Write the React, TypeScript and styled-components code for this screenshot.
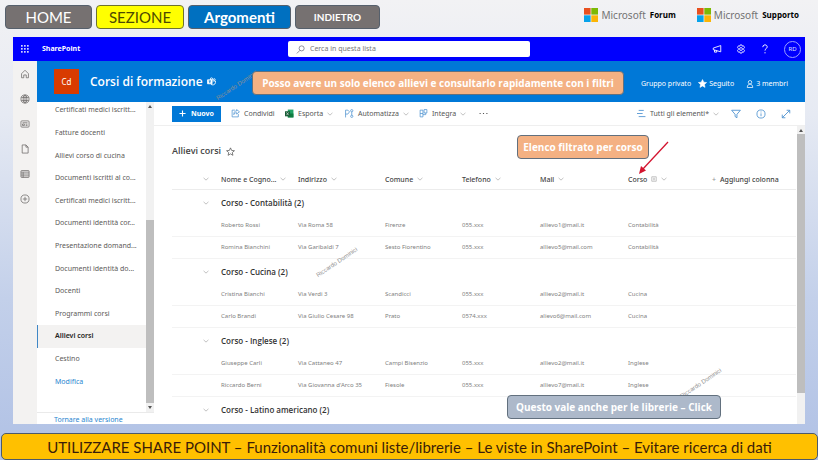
import React from 'react';
import styled, { createGlobalStyle } from 'styled-components';

const GlobalStyle = createGlobalStyle`
  *, *::before, *::after { box-sizing: border-box; }
  body { margin: 0; }
  button, input { font: inherit; color: inherit; }
  a { color: inherit; text-decoration: none; }
`;

const ui = '"Noto Sans", "Open Sans", sans-serif';
const geometric = 'Lato, "Open Sans", sans-serif';

const Page = styled.div`
  min-height: 100vh;
  display: flex;
  flex-direction: column;
  overflow: hidden;
  font: 7px/10px ${ui};
  color: #555;
  background: linear-gradient(180deg, #f2f2f4 0%, #e6eaf3 25%, #c3d0ea 65%, #b0c1e5 100%);
`;

const SlideHeader = styled.header`
  height: 37px;
  padding: 4px 19px 8px 5px;
  display: flex;
  align-items: center;
  justify-content: space-between;
`;

const SlideNav = styled.nav`
  display: flex;
  gap: 4px;
`;

const SlideLink = styled.a<{ $width: number; $bg: string; $fg: string; $size: number; $bold?: boolean }>`
  width: ${(p) => p.$width}px;
  height: 24px;
  display: flex;
  align-items: center;
  justify-content: center;
  border: 1px solid ${(p) => (p.$fg === '#fff' ? '#56606c' : '#6d7230')};
  border-radius: 4px;
  background: ${(p) => p.$bg};
  color: ${(p) => p.$fg};
  font: ${(p) => (p.$bold ? 700 : 400)} ${(p) => p.$size}px/20px ${geometric};
`;

const Brands = styled.div`
  align-self: flex-start;
  margin-top: 4px;
  display: flex;
  gap: 21px;
`;

const Brand = styled.a`
  display: flex;
  align-items: center;
  color: #737373;
  font: 10px/14px "Noto Sans", sans-serif;
  svg { margin-right: 3px; }
  strong { margin-left: 4px; color: #000; font: 700 8px/14px "Open Sans", sans-serif; }
`;

const AppWindow = styled.main`
  position: relative;
  flex: 1;
  margin: 0 13px;
  display: flex;
  flex-direction: column;
  background: #fff;
`;

const SuiteBar = styled.div`
  height: 24px;
  display: grid;
  grid-template-columns: 1fr 242px 1fr;
  align-items: center;
  background: #0000fe;
  color: #fff;
`;

const SuiteBrand = styled.div`
  display: flex;
  align-items: center;
  gap: 12px;
  padding-left: 7px;
  font: 700 7px/10px ${ui};
`;

const SearchBox = styled.label`
  height: 16px;
  display: flex;
  align-items: center;
  gap: 5px;
  padding: 0 8px;
  border-radius: 2px;
  background: #fff;
  color: #6a6a7a;
  input {
    flex: 1;
    min-width: 0;
    padding: 0;
    border: 0;
    outline: 0;
    background: none;
    font: 7px/10px ${ui};
  }
  input::placeholder { color: #777; opacity: 1; }
`;

const SuiteActions = styled.div`
  display: flex;
  justify-content: flex-end;
  align-items: center;
  gap: 14px;
  padding-right: 4px;
`;

const IconButton = styled.button<{ $color?: string }>`
  padding: 0;
  border: 0;
  background: none;
  display: flex;
  align-items: center;
  justify-content: center;
  color: ${(p) => p.$color || 'inherit'};
`;

const Avatar = styled.button`
  width: 17px;
  height: 17px;
  padding: 0;
  border: 1px solid #9aa0ff;
  border-radius: 50%;
  background: none;
  color: #dfe2ff;
  font: 6px/10px ${ui};
`;

const Body = styled.div`
  flex: 1;
  display: flex;
`;

const Rail = styled.nav`
  width: 24px;
  padding-top: 8px;
  display: flex;
  flex-direction: column;
  align-items: center;
  gap: 15px;
  background: #f3f2f1;
  color: #6c6a68;
`;

const Site = styled.div`
  flex: 1;
  min-width: 0;
  display: flex;
  flex-direction: column;
`;

const SiteHeader = styled.div`
  height: 41px;
  padding: 0 17px;
  display: flex;
  align-items: center;
  background: #0078d7;
  color: #fff;
`;

const SiteLogo = styled.div`
  width: 25px;
  height: 25px;
  margin-right: 11px;
  display: flex;
  align-items: center;
  justify-content: center;
  background: #d83b01;
  font: 8px/10px ${ui};
`;

const SiteTitle = styled.h1`
  margin: 0 4px 0 0;
  font: 600 12px/16px "Open Sans", sans-serif;
`;

const SiteMeta = styled.div`
  margin-left: auto;
  padding-top: 4px;
  display: flex;
  align-items: center;
  font: 7px/10px ${ui};
`;

const MetaButton = styled.button<{ $space: number }>`
  margin-left: ${(p) => p.$space}px;
  padding: 0;
  border: 0;
  background: none;
  display: flex;
  align-items: center;
  gap: 2px;
`;

const Columns = styled.div`
  flex: 1;
  display: flex;
`;

const SideNav = styled.nav`
  width: 117px;
  display: flex;
  flex-direction: column;
`;

const SideScroll = styled.div`
  flex: 1;
  display: flex;
  overflow: hidden;
`;

const SideList = styled.ul`
  flex: 1;
  min-width: 0;
  margin: -3px 0 0;
  padding: 0 0 19px;
  list-style: none;
  display: grid;
  grid-auto-rows: 1fr;
`;

const SideItem = styled.li<{ $active?: boolean; $link?: boolean }>`
  display: flex;
  align-items: center;
  padding-left: 17px;
  border-left: 1px solid ${(p) => (p.$active ? '#3f87c6' : 'transparent')};
  background: ${(p) => (p.$active ? '#f3f2f1' : 'none')};
  color: ${(p) => (p.$link ? '#2a86d0' : p.$active ? '#252423' : '#5c5a58')};
  font-weight: ${(p) => (p.$active ? 600 : 400)};
  white-space: nowrap;
`;

const SideFooter = styled.a`
  padding: 3px 0 0 17px;
  border-top: 1px solid #eaeaea;
  color: #2a86d0;
  line-height: 8px;
`;

const Scrollbar = styled.div<{ $before: number; $after: number }>`
  width: 8px;
  flex: none;
  display: flex;
  flex-direction: column;
  align-items: center;
  padding-top: 3px;
  background: #f1f1f1;
  color: #555;
  svg { flex: none; }
  span {
    width: 100%;
    flex: 1;
    margin: ${(p) => p.$before}px 0 ${(p) => p.$after}px;
    background: #bebebe;
  }
`;

const Content = styled.section`
  flex: 1;
  min-width: 0;
  display: flex;
  flex-direction: column;
`;

const CommandBar = styled.div`
  height: 24px;
  padding: 0 14px 0 18px;
  display: flex;
  align-items: center;
  border-bottom: 1px solid #efefef;
`;

const NewButton = styled.button`
  width: 49px;
  height: 16px;
  margin-right: 10px;
  padding: 0;
  border: 0;
  display: flex;
  align-items: center;
  justify-content: center;
  gap: 5px;
  background: #0078d7;
  color: #fff;
  font: 700 7px/10px ${ui};
`;

const Command = styled.button<{ $width: number }>`
  width: ${(p) => p.$width}px;
  flex: none;
  padding: 0;
  border: 0;
  background: none;
  display: flex;
  align-items: center;
  gap: 4px;
  color: #555;
  white-space: nowrap;
  font: 7px/10px ${ui};
  svg { flex: none; }
  > svg:last-child { color: #999; }
`;

const ViewActions = styled.div`
  margin-left: auto;
  display: flex;
  align-items: center;
  gap: 15px;
  color: #4a90cf;
`;

const ListArea = styled.div`
  flex: 1;
  display: flex;
`;

const ListView = styled.div`
  flex: 1;
  min-width: 0;
  padding: 17px 9px 0 18px;
`;

const ListTitle = styled.h2`
  height: 16px;
  margin: 0 0 9px;
  display: flex;
  align-items: center;
  gap: 5px;
  color: #444;
  font: 600 9px/12px "Open Sans", sans-serif;
`;

const Table = styled.table`
  width: 100%;
  table-layout: fixed;
  border-collapse: separate;
  border-spacing: 0;
  text-align: left;
  th, td { padding: 0; white-space: nowrap; }
`;

const HeadCell = styled.th<{ $toggle?: boolean }>`
  height: 22px;
  && { padding-top: 2px; }
  border-bottom: 1px solid #ececec;
  color: #444;
  font: 500 7px/10px ${ui};
  svg { margin-left: ${(p) => (p.$toggle ? 31 : 4)}px; color: #999; }
`;

const AddMark = styled.span`
  margin-right: 4px;
  color: #999;
`;

const GroupCell = styled.th`
  height: 25px;
  color: #333;
  font: 600 8px/12px "Open Sans", sans-serif;
  svg { margin-left: 31px; color: #999; }
`;

const Cell = styled.td`
  height: 22px;
  && { padding-bottom: 1px; }
  border-bottom: 1px solid #f3f3f3;
  color: #808080;
  font: 6px/10px ${ui};
`;

const Callout = styled.div<{ $left: number; $top: number; $width: number; $bg: string }>`
  position: absolute;
  left: ${(p) => p.$left}px;
  top: ${(p) => p.$top}px;
  width: ${(p) => p.$width}px;
  height: 24px;
  display: flex;
  align-items: center;
  justify-content: center;
  border: 1px solid #62707e;
  border-radius: 4px;
  background: ${(p) => p.$bg};
  color: #fff;
  font: 700 10px/14px "Open Sans", sans-serif;
  white-space: nowrap;
`;

const Watermark = styled.span<{ $left: number; $top: number }>`
  position: absolute;
  left: ${(p) => p.$left}px;
  top: ${(p) => p.$top}px;
  transform: rotate(-34deg);
  transform-origin: left bottom;
  color: #909090;
  font: 6px/8px "Liberation Sans", sans-serif;
  white-space: nowrap;
`;

const Arrow = styled.svg`
  position: absolute;
  left: 624px;
  top: 104px;
`;

const Banner = styled.footer`
  height: 27px;
  margin: 9px 0 0 1px;
  display: flex;
  align-items: center;
  justify-content: center;
  border: 1px solid #4c5a6c;
  border-radius: 5px;
  background: #ffc000;
  color: #3b1d08;
  font: 15px/20px ${geometric};
  white-space: nowrap;
`;

const Icon = ({ size = 10, stroke = 1, children }: { size?: number; stroke?: number; children: React.ReactNode }) => (
  <svg width={size} height={size} viewBox="0 0 16 16" fill="none" stroke="currentColor" strokeWidth={stroke} aria-hidden="true">
    {children}
  </svg>
);

const Chevron = () => (
  <Icon size={6} stroke={1.6}><path d="M1.500 5L8 11l6.500-6" /></Icon>
);

const MicrosoftMark = () => (
  <svg width="14" height="14" viewBox="0 0 14 14" aria-hidden="true">
    <path fill="#e8501f" d="M0 0h6.6v6.6H0z" />
    <path fill="#7cb904" d="M7.3 0H14v6.6H7.3z" />
    <path fill="#06a2ea" d="M0 7.3h6.6V14H0z" />
    <path fill="#fbb506" d="M7.3 7.3H14V14H7.3z" />
  </svg>
);

const Waffle = () => (
  <svg width="10" height="10" viewBox="0 0 10 10" fill="#cfd2ff" aria-hidden="true">
    {[1, 4, 7].map((y) => [1, 4, 7].map((x) => <rect key={`${x}${y}`} x={x} y={y} width="1.7" height="1.7" />))}
  </svg>
);

const railIcons = [
  { name: 'Home', art: <path d="M2.500 7.500L8 2l5.500 5.500V14H10v-4.500H6V14H2.500z" /> },
  { name: 'Siti', art: <><circle cx="8" cy="8" r="6.500" /><ellipse cx="8" cy="8" rx="3" ry="6.500" /><path d="M2 5.700h12M2 10.300h12M8 1.500v13" /></> },
  { name: 'Notizie', art: <><rect x="1.500" y="3" width="13" height="10" rx="1.500" /><path d="M4 6h8M4 8h3v2.500H4zM9 8.300h3M9 10.500h3" /></> },
  { name: 'File', art: <path d="M3.500 1.500h6l3.500 3.500v9.500H3.500zM9.500 1.500V5H13" /> },
  { name: 'Elenchi', art: <><rect x="1.500" y="2.500" width="13" height="11" rx="1" /><path d="M1.500 5h13M1.500 8h13M1.500 11h13M5 5v8.500" /></> },
  { name: 'Crea', art: <><circle cx="8" cy="8" r="6.500" /><path d="M8 4.500v7M4.500 8h7" /></> },
];

const sideItems = [
  'Certificati medici iscritt...', 'Fatture docenti', 'Allievi corso di cucina', 'Documenti iscritti al co...',
  'Certificati medici iscritt...', 'Documenti identità cor...', 'Presentazione domand...', 'Documenti identità do...',
  'Docenti', 'Programmi corsi', 'Allievi corsi', 'Cestino', 'Modifica',
];

const groups = [
  { name: 'Contabilità', rows: [
    ['Roberto Rossi', 'Via Roma 58', 'Firenze', '055.xxx', 'allievo1@mail.it'],
    ['Romina Bianchini', 'Via Garibaldi 7', 'Sesto Fiorentino', '055.xxx', 'allievo5@mail.com'],
  ] },
  { name: 'Cucina', rows: [
    ['Cristina Bianchi', 'Via Verdi 3', 'Scandicci', '055.xxx', 'allievo2@mail.it'],
    ['Carlo Brandi', 'Via Giulio Cesare 98', 'Prato', '0574.xxx', 'alievo6@mail.com'],
  ] },
  { name: 'Inglese', rows: [
    ['Giuseppe Carli', 'Via Cattaneo 47', 'Campi Bisenzio', '055.xxx', 'allievo2@mail.it'],
    ['Riccardo Berni', "Via Giovanna d'Arco 35", 'Fiesole', '055.xxx', 'allievo7@mail.it'],
  ] },
  { name: 'Latino americano', rows: [] },
];

const columns = ['Nome e Cogno...', 'Indirizzo', 'Comune', 'Telefono', 'Mail', 'Corso'];
const columnWidths = [49, 77, 87, 77, 78, 88, 84, 84];

const ScrollTrack = ({ before, after, lower }: { before: number; after: number; lower?: boolean }) => (
  <Scrollbar $before={before} $after={after} aria-hidden="true">
    <svg width="4" height="3" viewBox="0 0 4 3"><path d="M0 3l2-3 2 3z" fill="currentColor" /></svg>
    <span />
    {lower && <svg width="4" height="6" viewBox="0 0 4 6"><path d="M0 0l2 3 2-3z" fill="currentColor" /></svg>}
  </Scrollbar>
);

export default function App() {
  return (
    <Page>
      <GlobalStyle />
      <SlideHeader>
        <SlideNav>
          <SlideLink href="#home" $width={87} $bg="#767171" $fg="#fff" $size={15}>HOME</SlideLink>
          <SlideLink href="#sezione" $width={88} $bg="#ffff00" $fg="#4d4a00" $size={15}>SEZIONE</SlideLink>
          <SlideLink href="#argomenti" $width={103} $bg="#0070c0" $fg="#fff" $size={15} $bold>Argomenti</SlideLink>
          <SlideLink href="#indietro" $width={85} $bg="#767171" $fg="#fff" $size={10} $bold>INDIETRO</SlideLink>
        </SlideNav>
        <Brands>
          <Brand href="#forum"><MicrosoftMark />Microsoft<strong>Forum</strong></Brand>
          <Brand href="#supporto"><MicrosoftMark />Microsoft<strong>Supporto</strong></Brand>
        </Brands>
      </SlideHeader>

      <AppWindow>
        <SuiteBar>
          <SuiteBrand><IconButton aria-label="App"><Waffle /></IconButton>SharePoint</SuiteBrand>
          <SearchBox>
            <Icon size={9} stroke={1.3}><circle cx="10" cy="6" r="4.500" /><path d="M7 9.500L1.500 15" /></Icon>
            <input type="search" placeholder="Cerca in questa lista" aria-label="Cerca in questa lista" />
          </SearchBox>
          <SuiteActions>
            <IconButton aria-label="Novità"><Icon stroke={1.4}><path d="M14 2.500v10L2 9V6.500zM4 9.500v3.500h3.500v-2.500" /></Icon></IconButton>
            <IconButton aria-label="Impostazioni"><Icon stroke={1.3}><circle cx="8" cy="8" r="2.300" /><path d="M6.500 1.500h3l.6 2 2-.6 1.500 2.600L12.300 7v2l1.300 1.500-1.500 2.600-2-.6-.6 2h-3l-.6-2-2 .6-1.500-2.600L3.700 9V7L2.400 5.500l1.500-2.600 2 .6z" /></Icon></IconButton>
            <IconButton aria-label="Guida"><Icon stroke={1.5}><path d="M4.500 5c0-5 7-4.500 7-.5 0 3-3.500 3-3.500 6M8 13v2" /></Icon></IconButton>
            <Avatar>RD</Avatar>
          </SuiteActions>
        </SuiteBar>

        <Body>
          <Rail>
            {railIcons.map((i) => (
              <IconButton key={i.name} aria-label={i.name}><Icon size={10} stroke={1.2}>{i.art}</Icon></IconButton>
            ))}
          </Rail>
          <Site>
            <SiteHeader>
              <SiteLogo>Cd</SiteLogo>
              <SiteTitle>Corsi di formazione</SiteTitle>
              <Icon size={9} stroke={1.5}><path d="M1 5h8v7H1z" fill="currentColor" /><circle cx="8" cy="3.500" r="2" /><circle cx="13" cy="4.500" r="1.500" /><path d="M10 7h5v3c0 4-6 5-8 3" /><path d="M3 7h4M5 7v4" stroke="#0078d7" /></Icon>
              <SiteMeta>
                <span>Gruppo privato</span>
                <MetaButton $space={7}>
                  <Icon size={9}><path d="M8 1l2.200 4.700 5.100.6-3.800 3.500 1 5.100L8 12.300l-4.500 2.600 1-5.100L.7 6.300l5.100-.6z" fill="currentColor" /></Icon>
                  Seguito
                </MetaButton>
                <MetaButton $space={12}>
                  <Icon size={8} stroke={1.5}><circle cx="8" cy="4.500" r="3.500" /><path d="M2.500 15c0-9 11-9 11 0z" /></Icon>
                  3 membri
                </MetaButton>
              </SiteMeta>
            </SiteHeader>

            <Columns>
              <SideNav>
                <SideScroll>
                  <SideList>
                    {sideItems.map((label, i) => (
                      <SideItem key={i} $active={label === 'Allievi corsi'} $link={label === 'Modifica'}>
                        <a href="#elenco">{label}</a>
                      </SideItem>
                    ))}
                  </SideList>
                  <ScrollTrack before={112} after={3} lower />
                </SideScroll>
                <SideFooter href="#classica">Tornare alla versione</SideFooter>
              </SideNav>

              <Content>
                <CommandBar>
                  <NewButton><Icon size={7} stroke={2.5}><path d="M8 1v14M1 8h14" /></Icon>Nuovo</NewButton>
                  <Command $width={54}>
                    <IconButton as="span" $color="#4a90cf"><Icon size={9} stroke={1.3}><path d="M7 2H2v12h11V9" /><path d="M10 1l5 4-5 4V6.500C7 6.500 6 8 5 10c0-5 2-6.500 5-6.500z" /></Icon></IconButton>
                    Condividi
                  </Command>
                  <Command $width={60}>
                    <Icon size={9} stroke={1}><path d="M5 1h10v14H5z" fill="#21a366" stroke="none" /><path d="M10 8h5v7H5V8z" fill="#107c41" stroke="none" /><path d="M0 4h9v9H0z" fill="#185c37" stroke="none" /><path d="M2.500 6l4 5M6.500 6l-4 5" stroke="#fff" /></Icon>
                    Esporta<Chevron />
                  </Command>
                  <Command $width={74}>
                    <IconButton as="span" $color="#4a90cf"><Icon size={9} stroke={1.3}><path d="M1 15V2h4l3 3-3 4H1M12 5v6" /><circle cx="12" cy="3" r="2" /><circle cx="12" cy="13" r="2" /></Icon></IconButton>
                    Automatizza<Chevron />
                  </Command>
                  <Command $width={60}>
                    <IconButton as="span" $color="#4a90cf"><Icon size={9} stroke={1.3}><path d="M2 2h5v12H2zM7 8H2M9 1h5v6H9zM7 10h5V7" /></Icon></IconButton>
                    Integra<Chevron />
                  </Command>
                  <IconButton aria-label="Altro"><Icon size={9}><path d="M1 7h2v2H1zM7 7h2v2H7zM13 7h2v2h-2z" fill="currentColor" stroke="none" /></Icon></IconButton>
                  <ViewActions>
                    <Command $width={79}>
                      <IconButton as="span" $color="#4a90cf"><Icon size={9} stroke={1.5}><path d="M3 2.500h9M0 8h10M3 13.500h12" /></Icon></IconButton>
                      Tutti gli elementi*<Chevron />
                    </Command>
                    <IconButton aria-label="Filtri"><Icon stroke={1.4}><path d="M1 2h14L9.500 8.500V14l-3-2V8.500z" /></Icon></IconButton>
                    <IconButton aria-label="Dettagli"><Icon stroke={1.3}><circle cx="8" cy="8" r="6.500" /><path d="M8 7v4.500M8 4v1.500" /></Icon></IconButton>
                    <IconButton aria-label="Espandi"><Icon stroke={1.4}><path d="M9 2h5v5M14 2L2 14M2 9v5h5" /></Icon></IconButton>
                  </ViewActions>
                </CommandBar>

                <ListArea>
                  <ListView>
                    <ListTitle>
                      Allievi corsi
                      <Icon size={9} stroke={1.2}><path d="M8 1.500l2 4.600 5 .5-3.800 3.300 1.100 4.900L8 12.200l-4.300 2.600 1.100-4.900L1 6.600l5-.5z" /></Icon>
                    </ListTitle>
                    <Table>
                      <colgroup>{columnWidths.map((w, i) => <col key={i} width={w} />)}</colgroup>
                      <thead>
                        <tr>
                          <HeadCell $toggle><Chevron /></HeadCell>
                          {columns.map((c) => (
                            <HeadCell key={c}>
                              {c}
                              {c === 'Corso' && <Icon size={6} stroke={1.5}><path d="M2 2h12v12H2zM5 6h6M5 10h6" /></Icon>}
                              <Chevron />
                            </HeadCell>
                          ))}
                          <HeadCell><AddMark>+</AddMark>Aggiungi colonna</HeadCell>
                        </tr>
                      </thead>
                      {groups.map((g) => (
                        <tbody key={g.name}>
                          <tr>
                            <GroupCell><Chevron /></GroupCell>
                            <GroupCell colSpan={7}>Corso - {g.name} (2)</GroupCell>
                          </tr>
                          {g.rows.map((r) => (
                            <tr key={r[0]}>
                              <Cell />
                              {r.map((v, i) => <Cell key={i}>{v}</Cell>)}
                              <Cell>{g.name}</Cell>
                              <Cell />
                            </tr>
                          ))}
                        </tbody>
                      ))}
                    </Table>
                  </ListView>
                  <ScrollTrack before={2} after={31} />
                </ListArea>
              </Content>
            </Columns>
          </Site>
        </Body>

        <Watermark $left={206} $top={57}>Riccardo Dominici</Watermark>
        <Watermark $left={306} $top={234}>Riccardo Dominici</Watermark>
        <Watermark $left={670} $top={355}>Riccardo Dominici</Watermark>
        <Callout $left={239} $top={34} $width={372} $bg="#f4b183">Posso avere un solo elenco allievi e consultarlo rapidamente con i filtri</Callout>
        <Callout $left={504} $top={98} $width={132} $bg="#f4b183">Elenco filtrato per corso</Callout>
        <Callout $left={494} $top={358} $width={214} $bg="#adb9ca">Questo vale anche per le librerie – Click</Callout>
        <Arrow width="34" height="34" viewBox="0 0 34 34" aria-hidden="true">
          <path d="M31 1L5 29" stroke="#d3142f" strokeWidth="1.300" />
          <path d="M2 33l2-8 5 4.500z" fill="#d3142f" />
        </Arrow>
      </AppWindow>

      <Banner>UTILIZZARE SHARE POINT – Funzionalità comuni liste/librerie – Le viste in SharePoint – Evitare ricerca di dati</Banner>
    </Page>
  );
}
